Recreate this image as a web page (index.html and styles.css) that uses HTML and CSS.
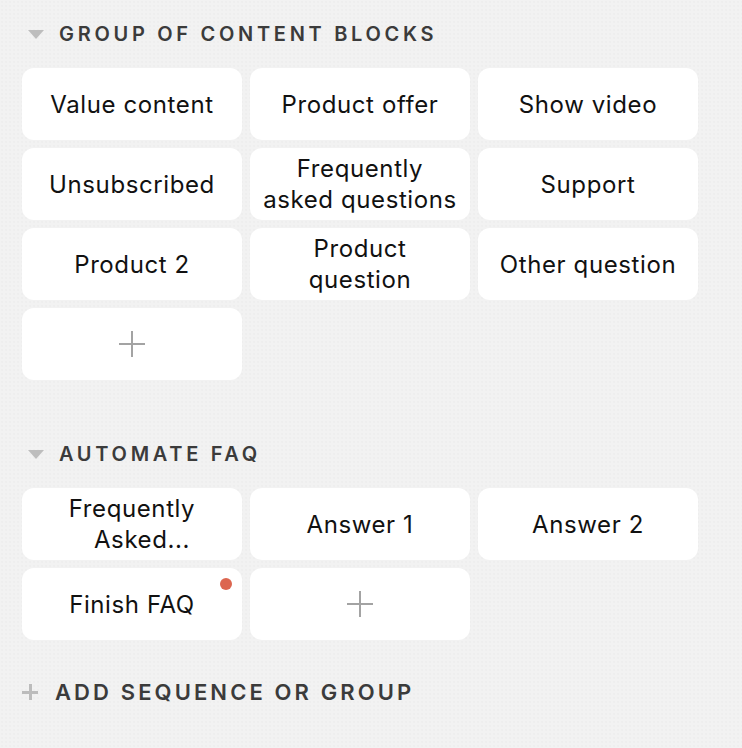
FILE: index.html
```html
<!DOCTYPE html>
<html>
<head>
<meta charset="utf-8">
<link rel="stylesheet" href="styles.css">
</head>
<body>
<div class="page">
  <section class="group">
    <div class="group-head"><span class="tri"></span><span class="title">GROUP OF CONTENT BLOCKS</span></div>
    <div class="grid">
      <div class="card">Value content</div>
      <div class="card">Product offer</div>
      <div class="card">Show video</div>
      <div class="card">Unsubscribed</div>
      <div class="card">Frequently<br>asked questions</div>
      <div class="card">Support</div>
      <div class="card">Product 2</div>
      <div class="card">Product<br>question</div>
      <div class="card">Other question</div>
      <div class="card add"><span class="plus"></span></div>
    </div>
  </section>
  <section class="group second">
    <div class="group-head"><span class="tri"></span><span class="title">AUTOMATE FAQ</span></div>
    <div class="grid">
      <div class="card">Frequently<br><span class="shift">Asked...</span></div>
      <div class="card">Answer 1</div>
      <div class="card">Answer 2</div>
      <div class="card">Finish FAQ<span class="dot"></span></div>
      <div class="card add"><span class="plus"></span></div>
    </div>
  </section>
  <div class="add-seq"><span class="bold-plus"></span><span class="title big">ADD SEQUENCE OR GROUP</span></div>
</div>
</body>
</html>
```
FILE: styles.css
```css
html, body {
  margin: 0;
  padding: 0;
}
body {
  width: 742px;
  height: 748px;
  overflow: hidden;
  background-color: #f2f2f2;
  background-image: radial-gradient(circle, #e9e9e9 0.6px, transparent 0.8px);
  background-size: 4px 4px;
  font-family: Inter, "Noto Sans", sans-serif;
}
.page {
  padding: 17px 0 0 22px;
}
.group-head, .add-seq {
  display: flex;
  align-items: center;
  height: 34px;
  margin-bottom: 17px;
}
.tri {
  width: 0;
  height: 0;
  margin-left: 6px;
  margin-right: 15px;
  border-left: 8px solid transparent;
  border-right: 8px solid transparent;
  border-top: 9px solid #bdbdbd;
}
.title {
  font-size: 20px;
  font-weight: 600;
  letter-spacing: 3.7px;
  color: #3b3b3b;
}
.title.big {
  font-size: 22px;
  letter-spacing: 3.1px;
}
.grid {
  display: grid;
  grid-template-columns: repeat(3, 220px);
  grid-auto-rows: 72px;
  gap: 8px;
}
.card {
  position: relative;
  background: #fff;
  border-radius: 12px;
  display: flex;
  flex-direction: column;
  align-items: center;
  justify-content: center;
  text-align: center;
  font-size: 24px;
  letter-spacing: 0.6px;
  line-height: 31px;
  color: #111;
  white-space: nowrap;
}
.shift {
  padding-left: 20px;
}
.plus {
  position: relative;
  width: 26px;
  height: 26px;
}
.plus::before, .plus::after {
  content: "";
  position: absolute;
  background: #a3a3a3;
}
.plus::before {
  left: 0;
  right: 0;
  top: 12px;
  height: 1.5px;
}
.plus::after {
  top: 0;
  bottom: 0;
  left: 12px;
  width: 1.5px;
}
.dot {
  position: absolute;
  top: 10px;
  right: 10px;
  width: 12px;
  height: 12px;
  border-radius: 50%;
  background: #dc6650;
}
.second {
  margin-top: 57px;
}
.add-seq {
  margin-top: 35px;
}
.bold-plus {
  position: relative;
  width: 16px;
  height: 16px;
  margin-right: 17px;
}
.bold-plus::before, .bold-plus::after {
  content: "";
  position: absolute;
  background: #bcbcbc;
}
.bold-plus::before {
  left: 0;
  right: 0;
  top: 6.5px;
  height: 3px;
}
.bold-plus::after {
  top: 0;
  bottom: 0;
  left: 6.5px;
  width: 3px;
}
```
